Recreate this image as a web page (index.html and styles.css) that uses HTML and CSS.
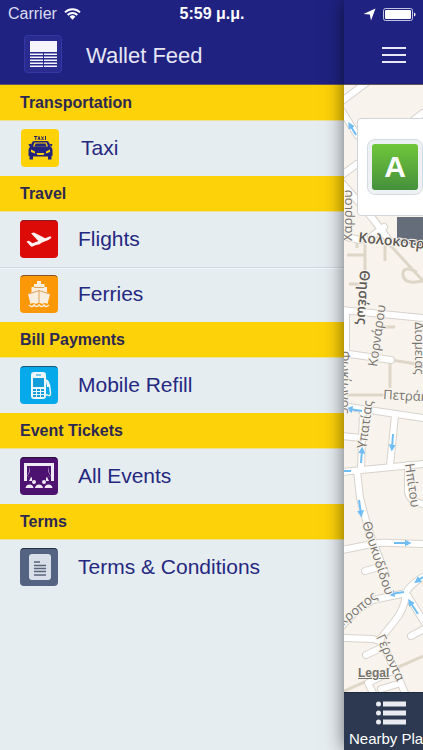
FILE: index.html
```html
<!DOCTYPE html>
<html lang="en">
<head>
  <meta charset="UTF-8">
  <meta name="viewport" content="width=device-width, initial-scale=1.0">
  <title>Wallet Feed</title>
  <link rel="stylesheet" href="styles.css">
</head>
<body>

  <div class="status">
    <span class="carrier">Carrier
      <svg width="17" height="12" viewBox="0 0 17 12" fill="none" stroke="#fff" stroke-width="2">
        <path d="M1 4.400a10.600 10.600 0 0 1 15 0M3.700 7a6.800 6.800 0 0 1 9.600 0"/>
        <path d="M5.600 8.800a4.100 4.100 0 0 1 5.800 0L8.500 11.800z" fill="#fff" stroke="none"/>
      </svg>
    </span>
    <span class="time">5:59 μ.μ.</span>
    <span class="indicators">
      <svg width="13" height="13" viewBox="0 0 13 13"><path d="M12.500.500L8 12.500 6.800 6.600.500 6z" fill="#fff"/></svg>
      <svg width="33" height="13" viewBox="0 0 33 13">
        <rect x=".500" y=".500" width="29" height="12" rx="2" fill="none" stroke="#c5c6e4"/>
        <rect x="2" y="2" width="26" height="9" rx="1" fill="#fff"/>
        <path d="M31 4.500q1.500.500 1.500 2t-1.500 2z" fill="#fff"/>
      </svg>
    </span>
  </div>

  <div class="app">
    <nav class="drawer">
      <a class="feed" href="#">
        <svg class="icon" viewBox="0 0 38 38">
          <rect x=".500" y=".500" width="37" height="37" rx="3" fill="#292b91" stroke="#3538a2"/>
          <path fill="#f4f4fa" d="M6 6h27v11H6zM6 18.500h13v1.500H6zM20 18.500h13v1.500H20zM6 21.500h13v1.500H6zM20 21.500h13v1.500H20zM6 24.500h13v1.500H6zM20 24.500h13v1.500H20zM6 27.500h13v1.500H6zM20 27.500h13v1.500H20zM6 30.500h13v1.500H6zM20 30.500h13v1.500H20z"/>
        </svg>
        <span>Wallet Feed</span>
      </a>

      <h2>Transportation</h2>
      <ul>
        <li><a class="taxi" href="#">
          <svg class="icon" viewBox="0 0 38 38">
            <rect width="38" height="38" rx="4" fill="#fdd209"/>
            <path d="M13 7.500h3.500M14.700 7.500v3.500M17 11l1-3.500 1 3.500M20.500 7.500l2 3.500M22.500 7.500l-2 3.500M24.500 7v4" stroke="#28235f" fill="none"/>
            <path fill="#22237c" d="M13 12h13q1.500 0 2 1.500l2 4.500q1.500 1 1.500 3v6h-1v3.500h-3.500V27.500H12v3H8.500V27h-1v-6q0-2 1.500-3l2-4.500q.500-1.500 2-1.500zM7.500 15h2.500v2.500H8.500zM31.500 15H29v2.500h1.500z"/>
            <path fill="#fdd209" d="M13.500 13.500h12l1.500 4H12zM10 20.500l4 2v2l-4-1.500zM29 20.500l-4 2v2l4-1.500zM15.500 24h8l-1 2h-6z"/>
            <path fill="#22237c" d="M14.500 14.500h10l1 3h-12z"/>
          </svg>
          Taxi
        </a></li>
      </ul>

      <h2>Travel</h2>
      <ul>
        <li><a href="#">
          <svg class="icon" viewBox="0 0 38 38">
            <rect width="38" height="38" rx="4" fill="#dc0b08"/>
            <path d="M1 2q1-1.500 3-1.500h30q2 0 3 1.500" fill="none" stroke="#891f22"/>
            <path fill="#fff3f1" d="M6.500 21.500l2.200-.700 4 2.500 5.600-2.300L11 13.200l3-.600 11.200 5.600 4.200-1.600q2-.500 2 1 0 1-3 2.300L22 22.500l-2.500 1.700L16 25l-3.500 1.500q-1.500.500-2.500-1z"/>
          </svg>
          Flights
        </a></li>
        <li><a href="#">
          <svg class="icon" viewBox="0 0 38 38">
            <rect width="38" height="38" rx="4" fill="#fc9707"/>
            <path d="M1 2q1-1.500 3-1.500h30q2 0 3 1.500" fill="none" stroke="#845529"/>
            <path fill="#f8eedf" d="M17 6h4v3h3.500v3H27v5.500l3 1.500-2.500 10q-3-2-5 0-3.500-2-7 0-2-2-5 0L8 19l3.500-1.500V12H14V9h3z"/>
            <path d="M19 16v12M14 12.500h10M8.500 19L19 15.500 29.500 19" stroke="#dca15a" fill="none"/>
            <path d="M9 30q3 3 5 0 2.500 3 5 0 2.500 3 5 0 2 3 5 0" fill="none" stroke="#f8eedf" stroke-width="1.500"/>
          </svg>
          Ferries
        </a></li>
      </ul>

      <h2>Bill Payments</h2>
      <ul>
        <li><a href="#">
          <svg class="icon" viewBox="0 0 38 38">
            <rect width="38" height="38" rx="4" fill="#06a9ea"/>
            <path d="M1 2q1-1.500 3-1.500h30q2 0 3 1.500" fill="none" stroke="#185875"/>
            <rect x="11" y="6" width="15" height="27" rx="3" fill="#edf6fa"/>
            <path fill="#159cda" d="M13 12h11v9H13zM16 8.500h5v1h-5z"/>
            <path stroke="#159cda" stroke-width="2" stroke-dasharray="3 1" d="M13 24h11M13 27h11M13 30h11"/>
            <path d="M25 29h2.500q3 2 3-2l-1-8-2-4-2-1.500" fill="none" stroke="#edf6fa" stroke-width="1.500"/>
            <path d="M26 15h2.500l1 6H27z" fill="#edf6fa"/>
          </svg>
          Mobile Refill
        </a></li>
      </ul>

      <h2>Event Tickets</h2>
      <ul>
        <li><a href="#">
          <svg class="icon" viewBox="0 0 38 38">
            <rect width="38" height="38" rx="4" fill="#4d1170"/>
            <path d="M1 2q1-1.500 3-1.500h30q2 0 3 1.500" fill="none" stroke="#29123f"/>
            <path fill="#f1eaf5" d="M4 6h30v18h-3V9h-3q.500 7 3 10l-4 1 2 4H9l2-4-4-1q2.500-3 3-10H7v15H4z"/>
            <path fill="#4d1170" d="M10 9h18q-.500 7 3 10l-5 1.500V24H12v-3.500L7 19q3.500-3 3-10z"/>
            <g fill="#f1eaf5"><circle cx="14" cy="25" r="2"/><circle cx="24" cy="25" r="2"/>
              <path d="M5.500 31q.500-3.500 4-3.500t4 3.500zM15 31q.500-3.500 4-3.500t4 3.500zM24.500 31q.500-3.500 4-3.500t4 3.500z"/></g>
          </svg>
          All Events
        </a></li>
      </ul>

      <h2>Terms</h2>
      <ul>
        <li><a href="#">
          <svg class="icon" viewBox="0 0 38 38">
            <rect width="38" height="38" rx="4" fill="#536381"/>
            <path d="M1 2q1-1.500 3-1.500h30q2 0 3 1.500" fill="none" stroke="#252f45"/>
            <rect x="9" y="6" width="22" height="26" rx="3" fill="#d9dfe9"/>
            <path d="M14 14h6M14 17.500h12M14 20.500h12M14 23.500h12M14 27h12" stroke="#59647a" stroke-width="1.500"/>
          </svg>
          Terms &amp; Conditions
        </a></li>
      </ul>
    </nav>

    <main class="page">
      <header class="bar">
        <button class="menu" aria-label="Menu"><span></span><span></span><span></span></button>
      </header>

      <div class="map">
        <svg class="streets" viewBox="0 0 79 608" preserveAspectRatio="xMinYMin slice">
          <defs>
            <marker id="tip" viewBox="0 0 6 6" refX="3" refY="3" markerWidth="7" markerHeight="7" markerUnits="userSpaceOnUse" orient="auto">
              <path d="M0 0l6 3-6 3z" fill="#6fbdf3"/>
            </marker>
            <g id="roads">
              <path d="M-2 16L22-2M-2 26L13 50 29 62M-2 90L13 79M66 38L79 28M-2 98L13 115 29 134 47 158M-2 151L16 155M27 152L40 142"/>
              <path d="M-2 225L79 233M2 226V269M-2 268L47 275"/>
              <path d="M-2 321L79 333M-2 351L18 353M51 330L46 381M-2 387L79 379M19 326L17 385M13 386L16 413 24 443 41 488"/>
              <path d="M-2 465L28 459Q38 457 48 458L79 459M64 380V407Q66 417 79 419M21 486L32 483"/>
              <path d="M82 490Q65 500 62 508 61 524 50 537L37 553M62 508L29 515 12 526-2 541M-2 553L29 554 38 557 62 610M62 508L82 540M67 551L82 543M22 570L39 562M30 610L24 598 52 584M37 604L57 598"/>
            </g>
          </defs>
          <rect width="79" height="608" fill="#f8f4ed"/>
          <path d="M21 156V186M3 170H22M13 156V163M41 158V176M47 161L79 196M79 196Q60 200 59 190T73 187M5 199H16M37 242H51M47 275L79 280M46 276V303M3 310H42M-2 607L79 571" fill="none" stroke="#ded6c7" stroke-width="3"/>
          <use href="#roads" fill="none" stroke="#d8d2cd" stroke-width="8" stroke-linecap="round" stroke-linejoin="round"/>
          <use href="#roads" fill="none" stroke="#fff" stroke-width="6" stroke-linecap="round" stroke-linejoin="round"/>
          <g class="arrows">
            <path d="M12 50L6 40"/>
            <path d="M18 326L5 324"/>
            <path d="M49 349L48 363"/>
            <path d="M17 378L18 365"/>
            <path class="tail" d="M0 386H7"/>
            <path d="M15 415L17 429"/>
            <path d="M50 458H64"/>
            <path d="M60 507L47 509"/>
            <path d="M79 492L73 496"/>
            <path d="M74 529L66 517"/>
          </g>
          <path d="M53 132H79V162L53 156z" fill="#666d7a"/>
          <g class="names">
            <text transform="translate(8 156) rotate(-90)">Χαρρίου</text>
            <text class="major" transform="translate(14 157) rotate(6)">Κολοκοτρώνη</text>
            <text class="major" transform="translate(16 185) rotate(93)">Θησέως</text>
            <text transform="translate(33 282) rotate(-82)">Κορνάρου</text>
            <text transform="translate(71 237) rotate(90)">Διομείας</text>
            <text transform="translate(39 314) rotate(3)">Πετράκη</text>
            <text transform="translate(-3 266) rotate(90)">Φωκίωνος</text>
            <text transform="translate(22 364) rotate(-82)">Υπατίας</text>
            <text transform="translate(61 379) rotate(82)">Ηπίτου</text>
            <text transform="translate(18 438) rotate(72)">Θουκυδίδου</text>
            <text transform="translate(-12 550) rotate(-39)">Κέκροπος</text>
            <text transform="translate(32 552) rotate(65)">Γέροντα</text>
          </g>
        </svg>
        <div class="card"><span class="badge">A</span></div>
        <a class="legal" href="#">Legal</a>
      </div>

      <button class="nearby">
        <svg width="30" height="24" viewBox="0 0 30 24" fill="#e9ebf0">
          <circle cx="2.500" cy="3" r="2.500"/><circle cx="2.500" cy="12" r="2.500"/><circle cx="2.500" cy="21" r="2.500"/>
          <path d="M7 .500h23v5H7zM7 9.500h23v5H7zM7 18.500h23v5H7z"/>
        </svg>
        Nearby Places
      </button>
    </main>
  </div>

</body>
</html>
```

FILE: styles.css
```css
* {
  box-sizing: border-box;
}
body {
  margin: 0;
  font-family: "Liberation Sans", Arial, sans-serif;
  background: #e6edf1;
}
a {
  color: inherit;
  text-decoration: none;
}
button {
  border: 0;
  padding: 0;
  background: none;
  font-family: inherit;
}
.app {
  display: flex;
  min-height: 100vh;
  overflow: hidden;
}

/* status bar lies over both panels */
.status {
  position: absolute;
  z-index: 2;
  top: 0;
  left: 0;
  right: 0;
  display: grid;
  grid-template-columns: 1fr auto 1fr;
  align-items: center;
  height: 28px;
  padding: 0 7px 0 8px;
  color: #fff;
  font-size: 16px;
}
.carrier {
  display: flex;
  align-items: center;
  gap: 7px;
  color: #dcdcf0;
}
.time {
  font-weight: bold;
}
.indicators {
  display: flex;
  justify-content: flex-end;
  align-items: center;
  gap: 7px;
}

/* drawer */
.drawer {
  flex: 1;
  min-width: 0;
  color: #25287f;
  font-size: 21px;
}
.feed {
  display: flex;
  align-items: center;
  gap: 24px;
  height: 85px;
  padding: 24px 24px 0;
  background: #1f2280;
  border-bottom: 1px solid #5f5560;
  color: #e6e6f6;
  font-size: 22px;
}
.feed span {
  padding-top: 3px;
}
.icon {
  flex: none;
  width: 38px;
  height: 38px;
}
.drawer h2 {
  margin: 0;
  padding: 1px 20px 0;
  background: #fdd209;
  border-bottom: 1px solid #f0e293;
  color: #2c2853;
  font-size: 16px;
  line-height: 34px;
}
.drawer ul {
  margin: 0;
  padding: 0;
  list-style: none;
}
.drawer li a {
  display: flex;
  align-items: center;
  gap: 20px;
  height: 55px;
  padding: 0 20px 2px;
}
.drawer li + li a {
  border-top: 1px solid #cfd9e2;
  box-shadow: inset 0 1px #f6f9fb;
}
.drawer .taxi {
  padding-left: 21px;
  gap: 22px;
}

/* page pushed to the right */
.page {
  display: flex;
  flex-direction: column;
  flex: 0 0 79px;
  min-width: 0;
  box-shadow: 0 0 18px rgba(0, 0, 0, 0.55);
  z-index: 1;
}
.bar {
  height: 85px;
  padding: 47px 17px 0 38px;
  background: #1f2280;
  border-bottom: 1px solid #5f5560;
}
.menu {
  display: flex;
  flex-direction: column;
  gap: 5px;
  width: 100%;
}
.menu span {
  width: 100%;
  height: 2px;
  background: #e9e9f6;
}
.map {
  position: relative;
  flex: 1;
  overflow: hidden;
  background: #f8f4ed;
}
.streets {
  position: absolute;
  width: 100%;
  height: 100%;
}
.arrows path {
  fill: none;
  stroke: #6fbdf3;
  stroke-width: 2px;
  marker-end: url(#tip);
}
.arrows .tail {
  marker-end: none;
}
.names {
  font-family: "Open Sans", "Noto Sans", sans-serif;
  font-size: 13px;
  fill: #77736f;
  stroke: #f8f4ed;
  stroke-width: 2px;
  paint-order: stroke;
}
.names .major {
  font-size: 14px;
  font-weight: 600;
  fill: #5c5855;
}
.card {
  position: absolute;
  top: 33px;
  left: 13px;
  width: 300px;
  padding: 21px 10px;
  background: #fff;
  border: 1px solid #cfd5d9;
  border-radius: 4px;
}
.badge {
  display: block;
  width: 54px;
  height: 54px;
  border: 4px solid #eef1f4;
  border-radius: 7px;
  outline: 1px solid #d3dae0;
  background: linear-gradient(#6fc73a, #46903c);
  color: #fff;
  font-size: 30px;
  font-weight: bold;
  line-height: 46px;
  text-align: center;
}
.legal {
  position: absolute;
  left: 14px;
  bottom: 12px;
  color: #77736c;
  font-size: 12px;
  font-weight: bold;
  text-decoration: underline;
}
.nearby {
  display: flex;
  flex-direction: column;
  gap: 5px;
  height: 58px;
  padding: 8px 5px 0;
  overflow: hidden;
  background: #2d3951;
  border-top: 1px solid #1f293c;
  color: #fff;
  font-size: 15px;
  white-space: nowrap;
}
.nearby svg {
  flex: none;
  margin-left: 27px;
}
```
